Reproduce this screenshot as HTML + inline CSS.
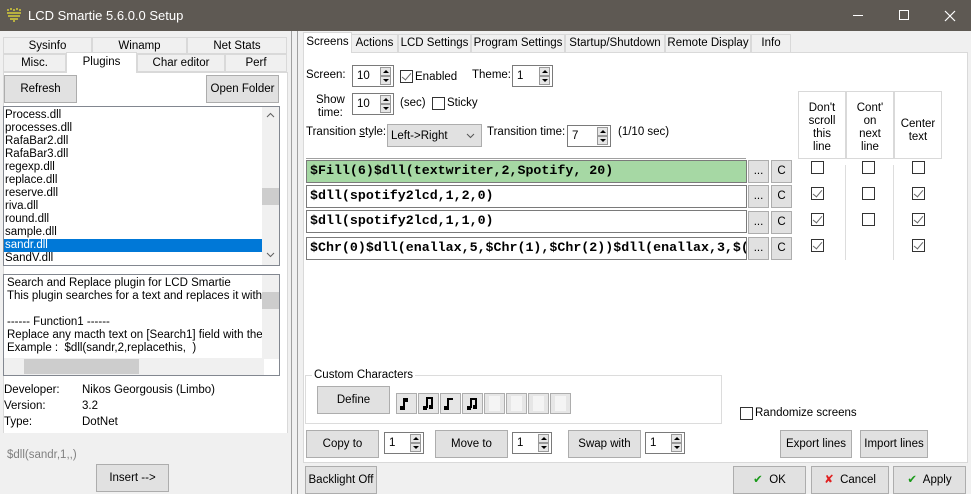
<!DOCTYPE html>
<html><head><style>
*{box-sizing:border-box;margin:0;padding:0}
body{width:971px;height:494px;overflow:hidden;background:#f0f0f0;font-family:"Liberation Sans",sans-serif;font-size:11.5px;color:#000;position:relative;white-space:nowrap}
.a{position:absolute}
.btn{position:absolute;background:#e1e1e1;border:1px solid #adadad;text-align:center;font-size:11.5px}
.tab{position:absolute;border:1px solid #d9d9d9;background:#f0f0f0;text-align:center;font-size:11.5px;line-height:17px;overflow:hidden}
.cb{position:absolute;width:13px;height:13px;border:1px solid #333;background:#fff}
.cb.k::after{content:"";position:absolute;left:3px;top:0px;width:4px;height:8px;border:solid #666;border-width:0 1px 1px 0;transform:rotate(40deg)}
.spin{position:absolute;background:#fff;border:1px solid #7a7a7a;height:22px}
.spin span{position:absolute;left:4px;top:4px}
.spin i{position:absolute;right:2px;width:11px;height:9px;background:#e6e6e6;border:1px solid #999}
.spin i.u{top:1px}.spin i.d{top:10px}
.spin i::after{content:"";position:absolute;left:2px;border-left:3px solid transparent;border-right:3px solid transparent}
.spin i.u::after{top:2px;border-bottom:3px solid #000}
.spin i.d::after{top:2px;border-top:3px solid #000}
.line{position:absolute;left:306px;width:441px;height:23px;border:1px solid #7a7a7a;background:#fff;font-family:"Liberation Mono",monospace;font-weight:bold;font-size:13.3px;line-height:20px;padding-left:3px;white-space:nowrap;overflow:hidden}
.sm{position:absolute;width:21px;height:23px;background:#e1e1e1;border:1px solid #adadad;text-align:center;line-height:21px}
</style></head><body>
<div class="a" style="left:0;top:0;width:971px;height:31px;background:#5e5953"></div>
<svg class="a" style="left:6px;top:7px" width="16" height="16"><g fill="#b8b040"><rect x="1" y="2" width="2" height="2"/><rect x="4" y="1" width="2" height="2"/><rect x="10" y="1" width="2" height="2"/><rect x="13" y="2" width="2" height="2"/><rect x="1" y="5" width="14" height="2"/><rect x="2" y="8" width="12" height="2"/><rect x="4" y="11" width="8" height="2"/><rect x="7" y="13" width="2" height="2"/><rect x="7" y="2" width="2" height="2"/></g></svg>
<div class="a" style="left:28px;top:8px;color:#fff;font-size:13px">LCD Smartie 5.6.0.0 Setup</div>
<div class="a" style="left:853px;top:15px;width:10px;height:1px;background:#fff"></div>
<div class="a" style="left:899px;top:10px;width:10px;height:10px;border:1px solid #fff"></div>
<svg class="a" style="left:944px;top:10px" width="12" height="12"><path d="M1 1L11 11M11 1L1 11" stroke="#fff" stroke-width="1.2"/></svg>

<div class="tab" style="left:3px;top:37px;width:89px;height:17px">Sysinfo</div>
<div class="tab" style="left:92px;top:37px;width:95px;height:17px">Winamp</div>
<div class="tab" style="left:187px;top:37px;width:100px;height:17px">Net Stats</div>
<div class="tab" style="left:3px;top:54px;width:63px;height:18px">Misc.</div>
<div class="tab" style="left:137px;top:54px;width:88px;height:18px">Char editor</div>
<div class="tab" style="left:225px;top:54px;width:62px;height:18px">Perf</div>
<div class="a" style="left:3px;top:72px;width:285px;height:361px;background:#fff;border:1px solid #d9d9d9;border-bottom:none"></div>
<div class="tab" style="left:66px;top:52px;width:71px;height:21px;background:#fff;border-bottom:none;line-height:18px">Plugins</div>
<div class="btn" style="left:4px;top:75px;width:73px;height:28px;line-height:26px">Refresh</div>
<div class="btn" style="left:206px;top:75px;width:73px;height:28px;line-height:26px">Open Folder</div>
<div class="a" style="left:3px;top:106px;width:277px;height:160px;border:1px solid #828790;background:#fff;line-height:13px;padding-top:2px;overflow:hidden">
<div style="padding-left:1px">Process.dll<br>processes.dll<br>RafaBar2.dll<br>RafaBar3.dll<br>regexp.dll<br>replace.dll<br>reserve.dll<br>riva.dll<br>round.dll<br>sample.dll</div>
<div style="background:#0078d7;color:#fff;width:258px;padding-left:1px">sandr.dll</div>
<div style="padding-left:1px">SandV.dll</div>
<div class="a" style="left:258px;top:0;width:17px;height:158px;background:#f0f0f0"></div>
<div class="a" style="left:258px;top:81px;width:17px;height:17px;background:#cdcdcd"></div>
<svg class="a" style="left:262px;top:5px" width="9" height="6"><path d="M1 5L4.5 1.5L8 5" stroke="#606060" fill="none"/></svg>
<svg class="a" style="left:262px;top:145px" width="9" height="6"><path d="M1 1L4.5 4.5L8 1" stroke="#606060" fill="none"/></svg>
</div>
<div class="a" style="left:3px;top:274px;width:277px;height:102px;border:1px solid #828790;background:#fff;line-height:13px;padding:2px 0 0 3px;white-space:nowrap;overflow:hidden">Search and Replace plugin for LCD Smartie<br>This plugin searches for a text and replaces it with an<br><br>------ Function1 ------<br>Replace any macth text on [Search1] field with the [R<br>Example :&nbsp; $dll(sandr,2,replacethis,&nbsp; )
<div class="a" style="left:258px;top:0;width:17px;height:84px;background:#f0f0f0"></div>
<div class="a" style="left:258px;top:17px;width:17px;height:17px;background:#cdcdcd"></div>
<div class="a" style="left:0;top:83px;width:260px;height:17px;background:#f0f0f0"></div>
<div class="a" style="left:20px;top:84px;width:115px;height:15px;background:#cdcdcd"></div>
</div>
<div class="a" style="left:4px;top:382px;line-height:16px">Developer:<br>Version:<br>Type:</div>
<div class="a" style="left:82px;top:382px;line-height:16px">Nikos Georgousis (Limbo)<br>3.2<br>DotNet</div>
<div class="a" style="left:7px;top:449px;color:#808080">$dll(sandr,1,,)</div>
<div class="btn" style="left:96px;top:464px;width:73px;height:28px;line-height:26px">Insert --&gt;</div>

<div class="a" style="left:291px;top:31px;width:1px;height:463px;background:#a0a0a0"></div>
<div class="a" style="left:297px;top:31px;width:1px;height:463px;background:#a0a0a0"></div>

<div class="a" style="left:303px;top:52px;width:665px;height:411px;background:#fff;border:1px solid #d9d9d9"></div>
<div class="tab" style="left:351px;top:34px;width:47px;height:19px">Actions</div>
<div class="tab" style="left:398px;top:34px;width:73px;height:19px">LCD Settings</div>
<div class="tab" style="left:471px;top:34px;width:94px;height:19px">Program Settings</div>
<div class="tab" style="left:565px;top:34px;width:100px;height:19px">Startup/Shutdown</div>
<div class="tab" style="left:665px;top:34px;width:86px;height:19px">Remote Display</div>
<div class="tab" style="left:751px;top:34px;width:40px;height:19px">Info</div>
<div class="tab" style="left:303px;top:32px;width:49px;height:21px;background:#fff;border-bottom:none;line-height:18px">Screens</div>

<div class="a" style="left:306px;top:69px">Screen:</div>
<div class="spin" style="left:352px;top:65px;width:42px"><span>10</span><i class="u"></i><i class="d"></i></div>
<div class="cb k" style="left:400px;top:70px"></div>
<div class="a" style="left:415px;top:71px">Enabled</div>
<div class="a" style="left:472px;top:69px">Theme:</div>
<div class="spin" style="left:512px;top:65px;width:41px"><span>1</span><i class="u"></i><i class="d"></i></div>
<div class="a" style="left:316px;top:94px;text-align:center;line-height:13px">Show<br>time:</div>
<div class="spin" style="left:352px;top:93px;width:42px"><span>10</span><i class="u"></i><i class="d"></i></div>
<div class="a" style="left:400px;top:97px">(sec)</div>
<div class="cb" style="left:432px;top:97px"></div>
<div class="a" style="left:447px;top:97px">Sticky</div>
<div class="a" style="left:306px;top:126px">Transition <u>s</u>tyle:</div>
<div class="a" style="left:387px;top:124px;width:95px;height:23px;background:#e1e1e1;border:1px solid #adadad;padding:5px 0 0 3px">Left-&gt;Right<svg style="position:absolute;right:6px;top:8px" width="9" height="6"><path d="M1 1L4.5 4.5L8 1" stroke="#555" fill="none"/></svg></div>
<div class="a" style="left:487px;top:126px">Transition time:</div>
<div class="spin" style="left:567px;top:125px;width:44px"><span>7</span><i class="u"></i><i class="d"></i></div>
<div class="a" style="left:618px;top:126px">(1/10 sec)</div>
<div class="a" style="left:306px;top:158px;width:440px;height:1px;background:#a0a0a0"></div>

<div class="line" style="top:160px;background:#a6d8a4">$Fill(6)$dll(textwriter,2,Spotify, 20)</div>
<div class="line" style="top:185px">$dll(spotify2lcd,1,2,0)</div>
<div class="line" style="top:210px">$dll(spotify2lcd,1,1,0)</div>
<div class="line" style="top:237px">$Chr(0)$dll(enallax,5,$Chr(1),$Chr(2))$dll(enallax,3,$(</div>
<div class="sm" style="left:748px;top:160px">...</div><div class="sm" style="left:771px;top:160px">C</div>
<div class="sm" style="left:748px;top:185px">...</div><div class="sm" style="left:771px;top:185px">C</div>
<div class="sm" style="left:748px;top:211px">...</div><div class="sm" style="left:771px;top:211px">C</div>
<div class="sm" style="left:748px;top:237px">...</div><div class="sm" style="left:771px;top:237px">C</div>

<div class="a" style="left:798px;top:91px;width:48px;height:68px;border:1px solid #d9d9d9;text-align:center;line-height:13px;padding-top:10px">Don't<br>scroll<br>this<br>line</div>
<div class="a" style="left:846px;top:91px;width:48px;height:68px;border:1px solid #d9d9d9;text-align:center;line-height:13px;padding-top:10px">Cont'<br>on<br>next<br>line</div>
<div class="a" style="left:894px;top:91px;width:48px;height:68px;border:1px solid #d9d9d9;text-align:center;line-height:13px;padding-top:26px">Center<br>text</div>
<div class="a" style="left:845px;top:165px;width:1px;height:95px;background:#ddd"></div>
<div class="a" style="left:893px;top:165px;width:1px;height:95px;background:#ddd"></div>
<div class="cb" style="left:811px;top:161px"></div><div class="cb" style="left:862px;top:161px"></div><div class="cb" style="left:912px;top:161px"></div>
<div class="cb k" style="left:811px;top:187px"></div><div class="cb" style="left:862px;top:187px"></div><div class="cb k" style="left:912px;top:187px"></div>
<div class="cb k" style="left:811px;top:213px"></div><div class="cb" style="left:862px;top:213px"></div><div class="cb k" style="left:912px;top:213px"></div>
<div class="cb k" style="left:811px;top:239px"></div><div class="cb k" style="left:912px;top:239px"></div>

<div class="a" style="left:305px;top:375px;width:417px;height:49px;border:1px solid #dcdcdc"></div>
<div class="a" style="left:312px;top:369px;background:#fff;padding:0 2px">Custom Characters</div>
<div class="btn" style="left:317px;top:386px;width:73px;height:28px;line-height:26px">Define</div>
<svg class="a" style="left:396px;top:393px" width="176" height="21">
<g fill="#e6e6e6" stroke="#adadad"><rect x="0.5" y="0.5" width="20" height="20"/><rect x="22.5" y="0.5" width="20" height="20"/><rect x="44.5" y="0.5" width="20" height="20"/><rect x="66.5" y="0.5" width="20" height="20"/><rect x="88.5" y="0.5" width="20" height="20"/><rect x="110.5" y="0.5" width="20" height="20"/><rect x="132.5" y="0.5" width="20" height="20"/><rect x="154.5" y="0.5" width="20" height="20"/></g>
<g fill="#f4f4f4"><rect x="93" y="3" width="11" height="15"/><rect x="115" y="3" width="11" height="15"/><rect x="137" y="3" width="11" height="15"/><rect x="159" y="3" width="11" height="15"/></g>
<g fill="#000"><rect x="7" y="5" width="2" height="12"/><rect x="4" y="13" width="4" height="4"/><rect x="9" y="5" width="3" height="4"/>
<rect x="27" y="13" width="4" height="4"/><rect x="30" y="4" width="2" height="11"/><rect x="32" y="4" width="5" height="2"/><rect x="35" y="4" width="2" height="12"/><rect x="33" y="12" width="4" height="4"/>
<rect x="51" y="5" width="2" height="12"/><rect x="48" y="13" width="4" height="4"/><rect x="53" y="5" width="4" height="2"/>
<rect x="71" y="13" width="4" height="4"/><rect x="74" y="5" width="2" height="10"/><rect x="76" y="5" width="5" height="2"/><rect x="79" y="5" width="2" height="11"/><rect x="77" y="12" width="4" height="4"/></g></svg>
<div class="cb" style="left:740px;top:407px"></div>
<div class="a" style="left:755px;top:407px">Randomize screens</div>

<div class="btn" style="left:306px;top:430px;width:73px;height:28px;line-height:26px">Copy to</div>
<div class="spin" style="left:384px;top:432px;width:40px"><span>1</span><i class="u"></i><i class="d"></i></div>
<div class="btn" style="left:435px;top:430px;width:73px;height:28px;line-height:26px">Move to</div>
<div class="spin" style="left:512px;top:432px;width:40px"><span>1</span><i class="u"></i><i class="d"></i></div>
<div class="btn" style="left:568px;top:430px;width:73px;height:28px;line-height:26px">Swap with</div>
<div class="spin" style="left:645px;top:432px;width:40px"><span>1</span><i class="u"></i><i class="d"></i></div>
<div class="btn" style="left:780px;top:430px;width:72px;height:28px;line-height:26px">Export lines</div>
<div class="btn" style="left:860px;top:430px;width:68px;height:28px;line-height:26px">Import lines</div>

<div class="btn" style="left:305px;top:466px;width:72px;height:28px;line-height:26px">Backlight Off</div>
<div class="btn" style="left:733px;top:466px;width:73px;height:28px;line-height:26px"><span style="color:#1a9a1a">✔</span>&nbsp; OK</div>
<div class="btn" style="left:811px;top:466px;width:78px;height:28px;line-height:26px"><span style="color:#e02020">✘</span>&nbsp; Cancel</div>
<div class="btn" style="left:893px;top:466px;width:73px;height:28px;line-height:26px"><span style="color:#1a9a1a">✔</span>&nbsp; Apply</div>
</body></html>
